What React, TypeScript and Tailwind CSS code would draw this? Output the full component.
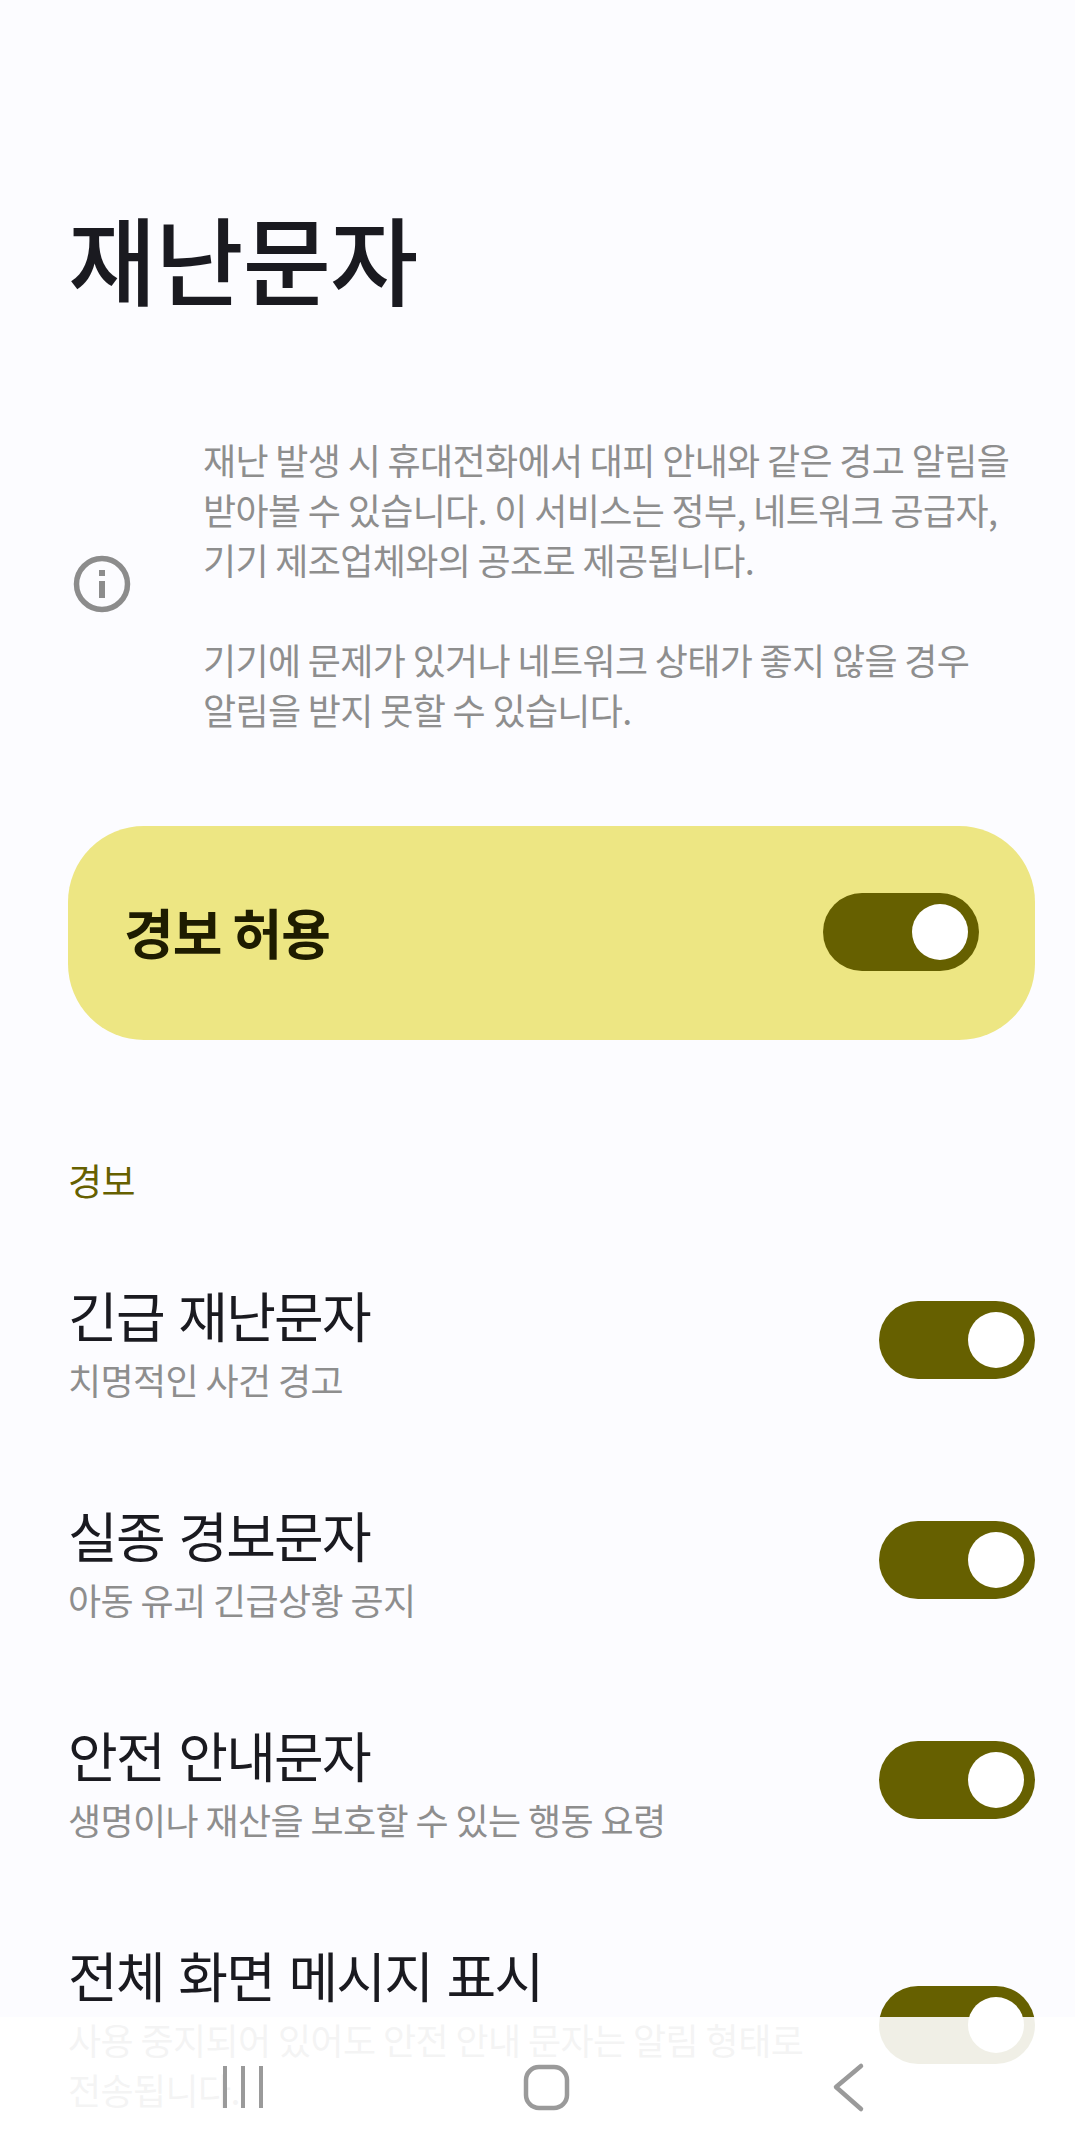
import React from 'react';

const FONT = "font-['Noto_Sans_CJK_KR','Noto_Sans',sans-serif]";

const alertRows = [
  { title: '긴급 재난문자', sub: ['치명적인 사건 경고'] },
  { title: '실종 경보문자', sub: ['아동 유괴 긴급상황 공지'] },
  { title: '안전 안내문자', sub: ['생명이나 재산을 보호할 수 있는 행동 요령'] },
  { title: '전체 화면 메시지 표시', sub: ['사용 중지되어 있어도 안전 안내 문자는 알림 형태로', '전송됩니다.'] },
];

const Toggle = () => (
  <div className="flex h-[78px] w-[156px] shrink-0 items-center justify-end rounded-full bg-[#666000] pr-[11px]">
    <div className="h-[56px] w-[56px] rounded-full bg-white" />
  </div>
);

const InfoIcon = () => (
  <svg width="58" height="58" viewBox="0 0 58 58" fill="none">
    <circle cx="29" cy="29" r="25.5" stroke="#8c8c8c" strokeWidth="5.5" />
    <rect x="26" y="15" width="6" height="6" fill="#8c8c8c" />
    <rect x="26" y="26" width="6" height="17" fill="#8c8c8c" />
  </svg>
);

const NavBar = () => (
  <div className="absolute bottom-0 left-0 h-[135px] w-full bg-white/90">
    <svg width="1075" height="135" viewBox="0 0 1075 135" fill="none" stroke="#9a9a9a">
      <path d="M225 49V91M243 49V91M261 49V91" strokeWidth="4" />
      <rect x="526" y="50" width="41" height="41" rx="13" strokeWidth="4.5" />
      <path d="M861 49L836 70L861 92" strokeWidth="4.5" strokeLinecap="round" strokeLinejoin="round" />
    </svg>
  </div>
);

export default function App() {
  return (
    <div className={`relative h-[2152px] w-full overflow-hidden bg-[#fcfcff] ${FONT}`}>
      <h1 className="pl-[68px] pt-[197px] text-[96px] leading-[120px] font-[450] tracking-[-1px] text-[#1a1a20]">
        재난문자
      </h1>

      <div className="mt-[117px] flex items-center pl-[73px]">
        <div className="w-[130px] shrink-0">
          <InfoIcon />
        </div>
        <div className="text-[36px] leading-[50px] tracking-[-0.65px] text-[#8e8e8e]">
          <p>재난 발생 시 휴대전화에서 대피 안내와 같은 경고 알림을</p>
          <p>받아볼 수 있습니다. 이 서비스는 정부, 네트워크 공급자,</p>
          <p>기기 제조업체와의 공조로 제공됩니다.</p>
          <p className="mt-[50px]">기기에 문제가 있거나 네트워크 상태가 좋지 않을 경우</p>
          <p>알림을 받지 못할 수 있습니다.</p>
        </div>
      </div>

      <div className="mr-[40px] mt-[92px] ml-[68px] flex h-[214px] items-center justify-between rounded-[76px] bg-[#ede683] pl-[56px] pr-[56px]">
        <span className="mb-[3px] text-[54px] font-bold tracking-[-1px] text-[#1e1c00]">경보 허용</span>
        <div className="mb-[2px]">
          <Toggle />
        </div>
      </div>

      <div className="mt-[115px] pl-[68px] text-[37px] leading-[50px] tracking-[-0.6px] text-[#666000]">경보</div>

      <div className="mt-[75px] flex flex-col gap-[96px] pl-[68px] pr-[40px]">
        {alertRows.map((row) => (
          <div key={row.title} className="flex items-center justify-between">
            <div>
              <div className="text-[54px] leading-[70px] tracking-[-1.75px] [word-spacing:4px] text-[#1a1a20]">{row.title}</div>
              <div className="mt-[4px] text-[36px] leading-[50px] tracking-[-0.6px] text-[#8e8e8e]">
                {row.sub.map((line) => (
                  <p key={line}>{line}</p>
                ))}
              </div>
            </div>
            <div className="mb-[5px]">
              <Toggle />
            </div>
          </div>
        ))}
      </div>

      <NavBar />
    </div>
  );
}
